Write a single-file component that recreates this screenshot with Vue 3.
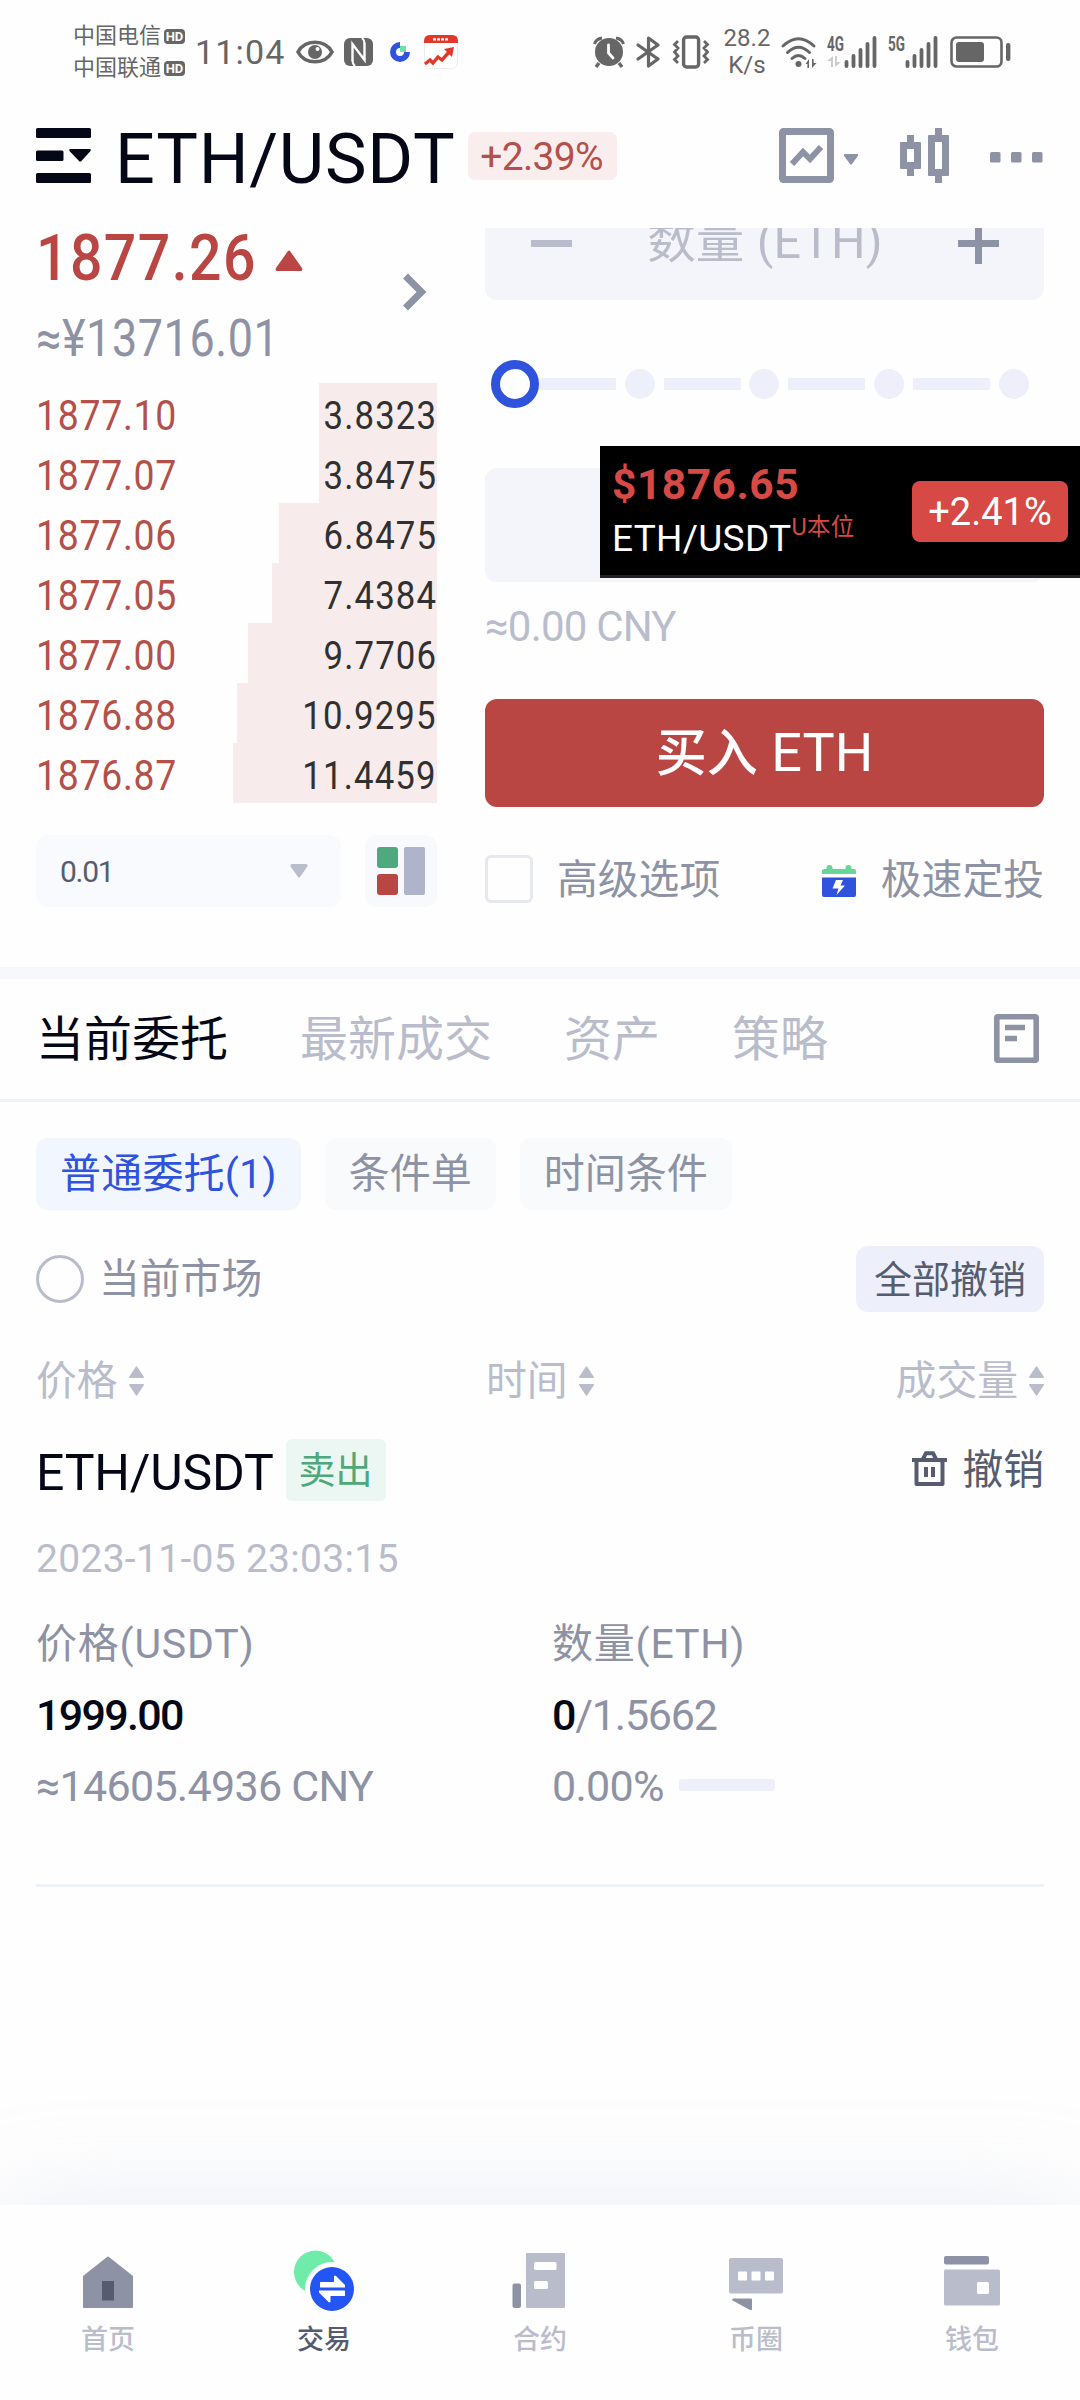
<script setup>
import { ref } from "vue";

const asks = ref([
  { price: "1877.10", amount: "3.8323", depth: 118 },
  { price: "1877.07", amount: "3.8475", depth: 118 },
  { price: "1877.06", amount: "6.8475", depth: 158 },
  { price: "1877.05", amount: "7.4384", depth: 165 },
  { price: "1877.00", amount: "9.7706", depth: 189 },
  { price: "1876.88", amount: "10.9295", depth: 200 },
  { price: "1876.87", amount: "11.4459", depth: 204 },
]);

const tabs = ["当前委托", "最新成交", "资产", "策略"];
const activeTab = ref(0);

const filters = ["普通委托(1)", "条件单", "时间条件"];
const activeFilter = ref(0);

const sortColumns = ["价格", "时间", "成交量"];
const advanced = ref(false);
</script>

<template>
  <div class="screen">
    <!-- status bar -->
    <div class="status">
      <div class="carriers">
        <div class="carrier"><span>中国电信</span><b class="hd">HD</b></div>
        <div class="carrier"><span>中国联通</span><b class="hd">HD</b></div>
      </div>
      <span class="clock">11:04</span>
      <svg class="ic-eye" width="38" height="26" viewBox="0 0 38 26">
        <path d="M2 13C9 0 29 0 36 13C29 26 9 26 2 13Z" fill="none" stroke="#666" stroke-width="3.6" />
        <circle cx="19" cy="13" r="7" fill="#666" />
        <circle cx="21.5" cy="10" r="2" fill="#fff" />
      </svg>
      <svg class="ic-nfc" width="29" height="28" viewBox="0 0 29 28">
        <rect width="29" height="28" rx="6" fill="#666" />
        <path d="M8.500 23V6L20.500 22V5" fill="none" stroke="#fff" stroke-width="2.400" />
        <path d="M8.500 22Q8.500 26 11 28M20.500 6Q20.500 2 18 0" fill="none" stroke="#fff" stroke-width="2" />
      </svg>
      <svg class="ic-coin" width="20" height="20" viewBox="0 0 20 20">
        <path d="M10 3A7 7 0 1 0 17 10" fill="none" stroke="#2f53dc" stroke-width="6" />
        <rect x="10" y="4" width="6" height="6" fill="#6de0a8" />
      </svg>
      <svg class="ic-stock" width="34" height="34" viewBox="0 0 34 34">
        <rect x=".5" y=".5" width="33" height="33" rx="6" fill="#fff" stroke="#ececec" />
        <path d="M0 8V6Q0 0 6 0H28Q34 0 34 6V8Z" fill="#e2382b" />
        <path d="M9 4.300H25" stroke="#fff" stroke-width="2.200" stroke-dasharray="3 1" />
        <path d="M1 29L6 25L9 28L14 22L18 25L26 16" fill="none" stroke="#e2382b" stroke-width="3.4" />
        <path d="M20 14L30 12L28 22Z" fill="#e2382b" />
      </svg>
      <svg class="ic-alarm" width="32" height="32" viewBox="0 0 32 32">
        <circle cx="16" cy="16" r="14" fill="#666" />
        <path d="M1.500 8Q3 3 9 2M23 2Q29 3 30.500 8" fill="none" stroke="#666" stroke-width="3" />
        <path d="M6 27L3 31M26 27L29 31" stroke="#666" stroke-width="3.400" />
        <path d="M15.500 9V17L20 22" fill="none" stroke="#fff" stroke-width="2.800" stroke-linecap="round" />
      </svg>
      <svg class="ic-bt" width="24" height="34" viewBox="0 0 24 34">
        <path d="M2 10L22 24L12.500 31V3L22 10L2 24" fill="none" stroke="#666" stroke-width="3.200" stroke-linejoin="round" stroke-linecap="round" />
      </svg>
      <svg class="ic-vib" width="38" height="34" viewBox="0 0 38 34">
        <rect x="11.600" y="2" width="15" height="30" rx="3" fill="none" stroke="#666" stroke-width="3.400" />
        <path d="M6 6L2.500 9.500L6 13L2.500 17L6 21L2.500 24.500L6 28M32 6L35.500 9.500L32 13L35.500 17L32 21L35.500 24.500L32 28" fill="none" stroke="#666" stroke-width="2.800" />
      </svg>
      <div class="speed"><span>28.2</span><span>K/s</span></div>
      <svg class="ic-wifi" width="37" height="33" viewBox="0 0 37 33">
        <g fill="none" stroke="#666" stroke-width="3" stroke-linecap="round">
          <path d="M2 10Q17.500 -4.500 33 10" />
          <path d="M6.500 16.500Q17.500 6 28.500 16.500" />
          <path d="M11 22.500Q17.500 16.500 24 22.500" />
        </g>
        <circle cx="17.500" cy="28" r="3" fill="#666" />
        <path d="M24.500 28L28 23V32H26.400V28ZM35.500 27L31 32V23H32.600V27Z" fill="#666" />
      </svg>
      <svg class="ic-signal" width="50" height="34" viewBox="0 0 50 34">
        <text class="net" x="0" y="16" textLength="17" lengthAdjust="spacingAndGlyphs">4G</text>
        <path d="M0 26L6 21V32H4V26ZM14 27L8 32V21H10V27Z" fill="#ccc" />
        <path d="M19.500 27V31M26.500 21V31M33.500 15V31M40.500 9V31M47.500 3V31" stroke="#666" stroke-width="3.800" stroke-linecap="round" />
      </svg>
      <svg class="ic-signal" width="50" height="34" viewBox="0 0 50 34">
        <text class="net" x="0" y="16" textLength="17" lengthAdjust="spacingAndGlyphs">5G</text>
        <path d="M19.500 27V31M26.500 21V31M33.500 15V31M40.500 9V31M47.500 3V31" stroke="#666" stroke-width="3.800" stroke-linecap="round" />
      </svg>
      <svg class="ic-battery" width="61" height="32" viewBox="0 0 61 32">
        <rect x="1.500" y="1.500" width="50" height="29" rx="5" fill="none" stroke="#666" stroke-width="2.600" />
        <rect x="6" y="6" width="28" height="20" rx="3" fill="#666" />
        <rect x="56" y="7" width="4.400" height="18" rx="2" fill="#666" />
      </svg>
    </div>

    <!-- pair header -->
    <div class="header">
      <svg class="ic-menu" width="55" height="55" viewBox="0 0 55 55" fill="#040716">
        <rect width="55" height="10" rx="1.500" />
        <rect y="22.500" width="27.500" height="10.500" rx="1.500" />
        <path d="M34 21H54Q55.500 21.500 54.500 23L45 33.500H43.500L33.500 23Q32.500 21.500 34 21Z" />
        <rect y="45" width="55" height="10" rx="1.500" />
      </svg>
      <h1 class="pair">ETH/USDT</h1>
      <span class="change">+2.39%</span>
      <div class="tools">
        <svg width="80" height="55" viewBox="0 0 80 55">
          <rect x="3.500" y="3.500" width="48" height="48" rx="1" fill="none" stroke="#8d92a4" stroke-width="7" />
          <path d="M13 36L24 24L31 31L42 19" fill="none" stroke="#8d92a4" stroke-width="6" />
          <path d="M66 26H78Q80 26.500 78.500 28.500L73 36Q72 37 71 36L65.500 28.500Q64 26.500 66 26Z" fill="#8d92a4" />
        </svg>
        <svg width="49" height="55" viewBox="0 0 49 55">
          <path fill="#8d92a4" fill-rule="evenodd" d="M7 7H14V14H20Q21 14 21 15V40Q21 41 20 41H14V48H7V41H1Q0 41 0 40V15Q0 14 1 14H7ZM7 21V34H14V21ZM35 0H42V7H48Q49 7 49 8V47Q49 48 48 48H42V55H35V48H29Q28 48 28 47V8Q28 7 29 7H35ZM35 14V41H42V14Z" />
        </svg>
        <svg width="53" height="55" viewBox="0 0 53 55" fill="#8d92a4">
          <rect x="0" y="24" width="10.500" height="10.500" rx="1.500" />
          <rect x="21" y="24" width="10.500" height="10.500" rx="1.500" />
          <rect x="42" y="24" width="10.500" height="10.500" rx="1.500" />
        </svg>
      </div>
    </div>

    <!-- order book and order form -->
    <div class="trade">
      <div class="book">
        <div class="ticker">
          <div>
            <div class="last">
              <span>1877.26</span>
              <svg width="28" height="21" viewBox="0 0 28 21">
                <path d="M13 1Q14 0 15 1L27 18Q28 20.500 26 21H2Q0 20.500 1 18Z" fill="#b94642" />
              </svg>
            </div>
            <div class="fiat">≈¥13716.01</div>
          </div>
          <svg class="ic-more" width="23" height="38" viewBox="0 0 23 38">
            <path d="M2.500 3L18.500 19L2.500 35" fill="none" stroke="#8d92a4" stroke-width="7" />
          </svg>
        </div>
        <div v-for="row in asks" :key="row.price" class="ask">
          <span class="ask-price">{{ row.price }}</span>
          <span class="ask-depth" :style="{ width: row.depth + 'px' }"></span>
          <span class="ask-amount">{{ row.amount }}</span>
        </div>
        <div class="book-tools">
          <div class="step">
            <span>0.01</span>
            <svg width="18" height="14" viewBox="0 0 18 14">
              <path d="M2 0H16Q19 1 17 3L10 13Q9 14 8 13L1 3Q-1 1 2 0Z" fill="#b9bdcb" />
            </svg>
          </div>
          <svg class="view" width="72" height="72" viewBox="0 0 72 72">
            <rect width="72" height="72" rx="12" fill="#f7f9fc" />
            <rect x="12" y="12" width="21" height="21" rx="3" fill="#4fa97f" />
            <rect x="12" y="39" width="21" height="21" rx="3" fill="#b94642" />
            <rect x="39" y="12" width="21" height="48" rx="2" fill="#afb4ca" />
          </svg>
        </div>
      </div>

      <div class="form">
        <!-- first field is scrolled partly under the header -->
        <div class="clip">
          <div class="field">
            <svg width="41" height="41" viewBox="0 0 41 41"><path d="M0 20.500H41" stroke="#b9bdcb" stroke-width="7" /></svg>
            <span>数量 (ETH)</span>
            <svg width="41" height="41" viewBox="0 0 41 41"><path d="M0 20.500H41M20.500 0V41" stroke="#8d92a4" stroke-width="7" /></svg>
          </div>
        </div>
        <div class="slider">
          <i class="knob"></i>
          <template v-for="n in 4" :key="n">
            <i class="rail" :class="{ first: n === 1 }"></i>
            <i class="stop"></i>
          </template>
        </div>
        <div class="field total"></div>
        <div class="worth">≈0.00 CNY</div>
        <button class="buy"><span>买入</span> ETH</button>
        <div class="options">
          <i class="check" @click="advanced = !advanced"></i>
          <span>高级选项</span>
          <svg class="ic-plan" width="34" height="32" viewBox="0 0 34 32">
            <path d="M0 9V6Q0 4 2 4H4.500V3Q4.500 0 7.500 0T10.500 3V4H23.500V3Q23.500 0 26.500 0T29.500 3V4H32Q34 4 34 6V9Z" fill="#65d598" />
            <path d="M0 12.500H34V30Q34 32 32 32H2Q0 32 0 30Z" fill="#2f53dc" />
            <path d="M14 15H21L18.500 20.500H23L14.500 30L16.500 23.500H10.500Z" fill="#fff" />
          </svg>
          <span>极速定投</span>
        </div>
      </div>
    </div>

    <div class="band"></div>

    <div class="tabs">
      <span
        v-for="(tab, i) in tabs"
        :key="tab"
        :class="{ active: i === activeTab }"
        @click="activeTab = i"
        >{{ tab }}</span
      >
      <svg class="ic-history" width="45" height="49" viewBox="0 0 45 49">
        <rect x="2.800" y="2.800" width="39.400" height="43.400" rx="1" fill="none" stroke="#8d92a4" stroke-width="5.600" />
        <path d="M11 13.500H31M11 24.500H23" stroke="#8d92a4" stroke-width="5.600" />
      </svg>
    </div>

    <!-- open orders -->
    <div class="orders">
      <div class="filters">
        <span
          v-for="(item, i) in filters"
          :key="item"
          :class="{ active: i === activeFilter }"
          @click="activeFilter = i"
          >{{ item }}</span
        >
      </div>
      <div class="market">
        <i class="radio"></i>
        <span>当前市场</span>
        <button class="cancel-all">全部撤销</button>
      </div>
      <div class="sorts">
        <div v-for="column in sortColumns" :key="column" class="sort">
          <span>{{ column }}</span>
          <svg width="15" height="30" viewBox="0 0 15 30" fill="#b9bdcb">
            <path d="M7 .5Q7.500 0 8 .5L15 11Q15 12 14.500 12H.5Q0 12 0 11Z" />
            <path d="M7 29.500Q7.500 30 8 29.500L15 19Q15 18 14.500 18H.5Q0 18 0 19Z" />
          </svg>
        </div>
      </div>

      <div class="order-head">
        <span class="order-pair">ETH/USDT</span>
        <span class="side">卖出</span>
        <div class="cancel">
          <svg width="35" height="35" viewBox="0 0 35 35">
            <path d="M0 9H35" stroke="#565c6f" stroke-width="4" />
            <path d="M11 8L14 2.200H21L24 8" fill="none" stroke="#565c6f" stroke-width="4" />
            <path d="M4.500 9V33H30.500V9" fill="none" stroke="#565c6f" stroke-width="4" stroke-linejoin="round" />
            <path d="M14 16V26M21 16V26" stroke="#565c6f" stroke-width="4" />
          </svg>
          <span>撤销</span>
        </div>
      </div>
      <div class="date">2023-11-05 23:03:15</div>
      <div class="detail">
        <div>
          <div class="line label">价格(USDT)</div>
          <div class="line num strong">1999.00</div>
          <div class="line num">≈14605.4936 CNY</div>
        </div>
        <div>
          <div class="line label">数量(ETH)</div>
          <div class="line num filled"><b>0</b>/1.5662</div>
          <div class="line num percent">0.00%<i class="progress"></i></div>
        </div>
      </div>
      <div class="rule"></div>
    </div>

    <!-- bottom navigation -->
    <div class="nav">
      <div class="nav-item">
        <svg width="70" height="64" viewBox="0 0 70 64">
          <path d="M34 9Q35 8 36 9L60 28V59Q60 60 59 60H11Q10 60 10 59V28Z" fill="#8d92a4" />
          <rect x="29" y="33" width="12" height="19.500" fill="#565c6f" />
        </svg>
        <span>首页</span>
      </div>
      <div class="nav-item current">
        <svg width="70" height="64" viewBox="0 0 70 64">
          <circle cx="26.500" cy="24" r="21.500" fill="#6feca9" />
          <circle cx="43" cy="41" r="27" fill="#fefefe" />
          <circle cx="43" cy="41" r="22" fill="#2354f4" />
          <path d="M31.500 34H45V28.500Q45.500 27 47 28L56 37V39.500H31.500Q31 39.500 31 39V34.500Q31 34 31.500 34ZM55.500 48H41.500V53.500Q41 55 39.500 54L30 44.500V42.500H55.500Q56 42.500 56 43V47.500Q56 48 55.500 48Z" fill="#fff" />
        </svg>
        <span>交易</span>
      </div>
      <div class="nav-item">
        <svg width="70" height="64" viewBox="0 0 70 64">
          <rect x="7.500" y="35.500" width="8.500" height="24.500" rx="2" fill="#8d92a4" />
          <rect x="21" y="5" width="39" height="55" rx="1" fill="#b9bdcb" />
          <rect x="29" y="14" width="22.500" height="8" rx="1.500" fill="#fff" />
          <rect x="29" y="33" width="14" height="8" rx="1.500" fill="#fff" />
        </svg>
        <span>合约</span>
      </div>
      <div class="nav-item">
        <svg width="70" height="64" viewBox="0 0 70 64">
          <rect x="8" y="10" width="54" height="35.500" rx="2" fill="#b9bdcb" />
          <rect x="17" y="23.500" width="9" height="9" rx="1" fill="#fff" />
          <rect x="30.500" y="23.500" width="9" height="9" rx="1" fill="#fff" />
          <rect x="44" y="23.500" width="9" height="9" rx="1" fill="#fff" />
          <path d="M12 50.500H30Q31 50.500 31 51.500V61.500Q30.500 62.500 29 62L11.500 52.500Q10.500 51 12 50.500Z" fill="#8d92a4" />
        </svg>
        <span>币圈</span>
      </div>
      <div class="nav-item">
        <svg width="70" height="64" viewBox="0 0 70 64">
          <rect x="7" y="8" width="45" height="8.500" rx="2" fill="#8d92a4" />
          <rect x="7" y="21.500" width="56" height="36" rx="1.500" fill="#b9bdcb" />
          <rect x="40" y="34" width="12" height="12" rx="1.500" fill="#fff" />
        </svg>
        <span>钱包</span>
      </div>
    </div>

    <!-- floating price window -->
    <div class="float">
      <div class="float-main">
        <div class="float-price">$1876.65</div>
        <div class="float-pair">ETH/USDT<sup>U本位</sup></div>
      </div>
      <span class="float-change">+2.41%</span>
    </div>
  </div>
</template>

<style>
body {
  margin: 0;
  background: #fefefe;
}
</style>

<style scoped>
.screen {
  position: relative;
  display: flex;
  flex-direction: column;
  width: 1080px;
  height: 2400px;
  overflow: hidden;
  background: #fefefe;
  color: #8d92a4;
  font-family: Roboto, "Noto Sans CJK SC", sans-serif;
  line-height: 1.2;
  white-space: nowrap;
}

svg {
  display: block;
  flex: none;
  overflow: visible;
}

i {
  display: block;
  flex: none;
  box-sizing: border-box;
}

button {
  border: 0;
  padding: 0;
  font-family: inherit;
}

.status {
  display: flex;
  align-items: center;
  height: 104px;
  padding-left: 73px;
  color: #666;
}

.carriers {
  width: 122px;
}

.carrier {
  display: flex;
  align-items: center;
  height: 32px;
  font-size: 22px;
  line-height: 30px;
}

.hd {
  margin-left: 3px;
  width: 21px;
  height: 15px;
  border-radius: 4px;
  background: #666;
  color: #fefefe;
  font-size: 13px;
  line-height: 15px;
  text-align: center;
}

.clock {
  width: 101px;
  font-size: 34px;
  letter-spacing: 1.2px;
}

.ic-nfc {
  margin-left: 10px;
}

.ic-coin {
  margin-left: 17px;
}

.ic-stock {
  margin-left: 14px;
}

.ic-alarm {
  margin-left: 135px;
}

.ic-bt {
  margin-left: 11px;
}

.ic-vib {
  margin-left: 12px;
}

.speed {
  display: flex;
  flex-direction: column;
  align-items: center;
  width: 46px;
  margin-left: 14px;
  font-size: 24px;
  line-height: 27px;
}

.ic-wifi {
  margin-left: 11px;
}

.ic-signal {
  margin-left: 9px;
}

.ic-signal + .ic-signal {
  margin-left: 11px;
}

.net {
  fill: #666;
  font-size: 20px;
  font-weight: 700;
}

.ic-battery {
  margin-left: 12px;
}

.header {
  display: flex;
  align-items: center;
  height: 103px;
  margin-bottom: 1px;
  padding: 0 37px 0 36px;
}

.pair {
  width: 342px;
  margin: 6px 0 0 24px;
  color: #040716;
  font-size: 70px;
  font-weight: 400;
  line-height: 80px;
  letter-spacing: 0.7px;
}

.change {
  box-sizing: border-box;
  width: 149px;
  height: 48px;
  margin-left: 11px;
  border-radius: 7px;
  background: #f9eeed;
  color: #b4504a;
  font-size: 39px;
  line-height: 50px;
  letter-spacing: -0.7px;
  text-indent: -2px;
  text-align: center;
}

.tools {
  display: flex;
  gap: 41px;
  margin-left: auto;
}

.trade {
  display: grid;
  grid-template-columns: 401px 559px;
  gap: 48px;
  height: 759px;
  padding: 0 36px;
}

.ticker {
  display: flex;
  justify-content: space-between;
  align-items: center;
  box-sizing: border-box;
  height: 175px;
  padding-right: 11px;
}

.last {
  display: flex;
  align-items: center;
  height: 66px;
  color: #b94642;
  font-size: 65px;
  font-weight: 500;
  letter-spacing: 1.6px;
}

/* narrow figures for prices */
.last span,
.fiat,
.ask-price {
  transform: scaleX(0.88);
  transform-origin: left;
}

.last span {
  width: 239px;
}

.last svg {
  margin-top: 4px;
}

.fiat {
  box-sizing: border-box;
  width: 300px;
  height: 60px;
  margin-top: 15px;
  padding-top: 3px;
  font-size: 51px;
  line-height: 60px;
  letter-spacing: 0.7px;
}

.ic-more {
  margin-bottom: 7px;
}

.ask {
  position: relative;
  display: flex;
  justify-content: space-between;
  height: 60px;
  line-height: 65px;
}

.ask-price {
  color: #b4504a;
  font-size: 42.5px;
  letter-spacing: 0.8px;
}

.ask-depth {
  position: absolute;
  top: 0;
  right: 0;
  height: 60px;
  background: #f7ebeb;
}

.ask-amount {
  position: relative;
  color: #303030;
  font-size: 39.5px;
  letter-spacing: 1.3px;
  transform: scaleX(0.88);
  transform-origin: right;
}

.book-tools {
  display: flex;
  justify-content: space-between;
  margin-top: 32px;
}

.step {
  display: flex;
  justify-content: space-between;
  align-items: center;
  box-sizing: border-box;
  width: 305px;
  height: 72px;
  padding: 0 33px 0 24px;
  border-radius: 12px;
  background: #f8fafd;
  color: #565c6f;
  font-size: 30px;
  letter-spacing: -1.3px;
}

.step span {
  padding-top: 1px;
}

.form {
  padding-top: 20px;
}

.clip {
  display: flex;
  align-items: flex-end;
  height: 72px;
  overflow: hidden;
}

.field {
  display: flex;
  justify-content: space-between;
  align-items: center;
  flex: none;
  box-sizing: border-box;
  width: 559px;
  height: 114px;
  padding: 0 45px 0 46px;
  border-radius: 12px;
  background: #f4f5fa;
  color: #b9bdcb;
  font-size: 48.5px;
}

.field span {
  margin-top: -1px;
  letter-spacing: 0.2px;
}

.slider {
  display: flex;
  align-items: center;
  height: 48px;
  margin: 60px 0;
  padding-left: 6px;
}

.knob {
  width: 48px;
  height: 48px;
  border: 9px solid #2f53dc;
  border-radius: 50%;
}

.rail {
  width: 77px;
  height: 12px;
  margin: 0 8.8px;
  background: #edf0fa;
}

.rail.first {
  margin-left: 0;
}

.stop {
  width: 30px;
  height: 30px;
  border-radius: 50%;
  background: #edf0fa;
}

.worth {
  height: 40px;
  margin-top: 24px;
  color: #b9bdcb;
  font-size: 42px;
  line-height: 42px;
  letter-spacing: -0.8px;
}

.buy {
  display: block;
  width: 559px;
  height: 108px;
  margin-top: 53px;
  border-radius: 12px;
  background: #b94642;
  color: #fff;
  font-size: 54px;
  line-height: 108px;
}

.buy span {
  font-size: 51px;
  font-weight: 500;
}

.options {
  display: flex;
  align-items: center;
  height: 48px;
  margin-top: 48px;
  font-size: 40.8px;
}

.options span {
  padding-top: 2px;
}

.check {
  width: 48px;
  height: 48px;
  margin-right: 24px;
  border: 3px solid #e6e8f0;
  border-radius: 6px;
}

.ic-plan {
  margin: 4px 25px 0 auto;
}

.band {
  height: 12px;
  background: #f7f8fb;
}

.tabs {
  display: flex;
  align-items: center;
  gap: 72px;
  height: 120px;
  padding: 0 41px 0 36px;
  border-bottom: 3px solid #edf1f8;
  color: #b9bdcb;
  font-size: 48px;
}

.tabs span {
  padding-top: 1px;
}

.tabs .active {
  color: #040716;
}

.ic-history {
  margin: 0 0 2px auto;
}

.orders {
  padding: 36px 36px 0;
}

.filters {
  display: flex;
  gap: 24px;
}

.filters span {
  height: 72px;
  padding: 0 24px;
  border-radius: 12px;
  background: #f9fafc;
  font-size: 41px;
  line-height: 72px;
}

.filters .active {
  background: #f2f7ff;
  color: #2f53dc;
  letter-spacing: 0.2px;
}

.market {
  display: flex;
  align-items: center;
  height: 66px;
  margin-top: 36px;
  font-size: 40.8px;
}

.radio {
  width: 48px;
  height: 48px;
  margin-right: 15px;
  border: 3px solid #b9bdcb;
  border-radius: 50%;
}

.cancel-all {
  width: 188px;
  height: 66px;
  margin-left: auto;
  border-radius: 12px;
  background: #edf0fa;
  color: #565c6f;
  font-size: 38px;
  line-height: 68px;
}

.sorts {
  display: grid;
  grid-template-columns: 450px 1fr auto;
  height: 60px;
  margin-top: 39px;
  color: #b9bdcb;
  font-size: 40.8px;
}

.sort {
  display: flex;
  align-items: center;
  gap: 11px;
}

.order-head {
  display: flex;
  align-items: center;
  height: 62px;
  margin-top: 28px;
}

.order-pair {
  width: 250px;
  padding-top: 5px;
  color: #040716;
  font-size: 50px;
  letter-spacing: -0.2px;
}

.side {
  width: 100px;
  height: 62px;
  border-radius: 6px;
  background: #ecf6f3;
  color: #4da97a;
  font-size: 37px;
  line-height: 66px;
  text-align: center;
  text-indent: -1px;
}

.cancel {
  display: flex;
  align-items: center;
  gap: 15px;
  margin: -2px 0 0 auto;
  color: #565c6f;
  font-size: 40.8px;
}

.cancel span {
  padding-top: 2px;
}

.date {
  height: 40px;
  margin-top: 37px;
  color: #b9bdcb;
  font-size: 39px;
  line-height: 42px;
  letter-spacing: 0.3px;
}

.detail {
  display: grid;
  grid-template-columns: 516px 1fr;
  margin-top: 46px;
}

.line {
  height: 40px;
  margin-bottom: 31px;
  line-height: 40px;
}

.label {
  font-size: 41px;
  letter-spacing: 0.8px;
}

.num {
  font-size: 43px;
  letter-spacing: -0.7px;
}

.strong {
  letter-spacing: -1.7px;
}

.filled {
  letter-spacing: -1.2px;
}

.strong,
.filled b {
  color: #040716;
  font-weight: 500;
}

.percent {
  display: flex;
  align-items: center;
}

.progress {
  width: 96px;
  height: 12px;
  margin: -2px 0 0 15px;
  border-radius: 3px;
  background: #edf0fa;
}

.rule {
  height: 3px;
  margin-top: 47px;
  background: #edf1f8;
}

.nav {
  display: grid;
  grid-template-columns: repeat(5, 216px);
  height: 195px;
  margin-top: auto;
  background: #fefefe;
  box-shadow: 0 0 100px rgba(180, 190, 215, 0.26);
}

.nav-item {
  display: flex;
  flex-direction: column;
  align-items: center;
  padding-top: 43px;
  color: #b9bdcb;
  font-size: 27px;
  font-weight: 500;
}

.nav-item span {
  margin-top: 8px;
  line-height: 40px;
}

.nav-item.current {
  color: #565c6f;
}

.float {
  position: absolute;
  top: 446px;
  left: 600px;
  display: flex;
  justify-content: space-between;
  width: 456px;
  height: 129px;
  padding: 0 12px;
  border-bottom: 3px solid #222;
  background: #000;
}

.float-main {
  padding-top: 17px;
}

.float-price {
  color: #d74944;
  font-size: 42.5px;
  font-weight: 700;
  line-height: 44px;
  letter-spacing: 0.5px;
}

.float-pair {
  display: flex;
  padding-top: 10px;
  color: #fff;
  font-size: 37px;
  line-height: 44px;
  letter-spacing: 0.3px;
}

.float-pair sup {
  margin-top: -2px;
  color: #d74944;
  font-size: 23.5px;
  line-height: 24px;
}

.float-change {
  width: 156px;
  height: 61px;
  margin-top: 35px;
  border-radius: 8px;
  background: #d74944;
  color: #fff;
  font-size: 38px;
  line-height: 63px;
  text-align: center;
}
</style>
